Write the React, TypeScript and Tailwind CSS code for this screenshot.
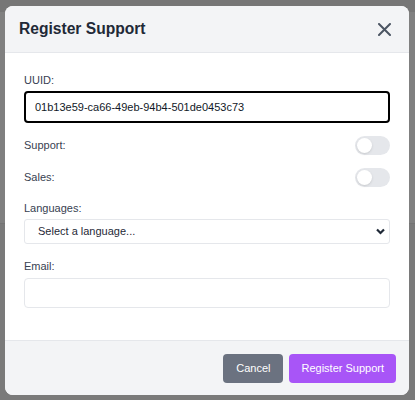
import React from "react";

// toggle switch, off state
function Toggle() {
  return (
    <span className="flex h-[19px] w-[35px] items-center rounded-full bg-[#e5e7eb] px-[2px]">
      <span className="h-[15px] w-[15px] rounded-full bg-white shadow-sm" />
    </span>
  );
}

export default function App() {
  return (
    <div className="relative h-[400px] w-full overflow-hidden bg-[#7a7a7a] font-['Liberation_Sans',Arial,sans-serif]">
      {/* page behind the overlay */}
      <div className="h-[12px] bg-[#767676]" />
      <div className="h-[212px] border-b border-[#747474] bg-[#808080]" />

      <div className="absolute left-[5px] top-[6px] flex w-[404px] flex-col overflow-hidden rounded-lg bg-white">
        <div className="flex h-[47px] items-center justify-between border-b border-[#e5e7eb] bg-[#f3f4f6] pl-[14px] pr-[18px]">
          <h2 className="text-[15.6px] font-bold text-[#1f2937]">Register Support</h2>
          <button className="text-[#4b5563]">
            <svg width="13" height="13" viewBox="0 0 13 13" fill="none" stroke="currentColor" strokeWidth="2" strokeLinecap="round">
              <path d="M1 1L12 12M12 1L1 12" />
            </svg>
          </button>
        </div>

        <div className="flex flex-col px-[19px] pb-[32px] pt-[19px] text-[11px] text-[#374151]">
          <label className="leading-[16px]">UUID:</label>
          <input
            readOnly
            value="01b13e59-ca66-49eb-94b4-501de0453c73"
            className="mt-[3px] h-[32px] rounded-[4px] border-2 border-black px-[9px] text-[11px] text-[#111827] outline-none"
          />

          <div className="mt-[13px] flex h-[19px] items-center justify-between">
            <span>Support:</span>
            <Toggle />
          </div>
          <div className="mt-[13px] flex h-[19px] items-center justify-between">
            <span>Sales:</span>
            <Toggle />
          </div>

          <label className="mt-[13px] leading-[16px]">Languages:</label>
          <div className="relative mt-[3px]">
            <select className="h-[25px] w-full appearance-none rounded-[3px] border border-[#e5e7eb] bg-white pl-[13px] text-[11px] text-[#1f2937] outline-none">
              <option>Select a language...</option>
            </select>
            <svg
              className="pointer-events-none absolute right-[5px] top-[9px] text-[#1f2937]"
              width="9"
              height="7"
              viewBox="0 0 9 7"
              fill="none"
              stroke="currentColor"
              strokeWidth="2.2"
            >
              <path d="M1 1.5L4.5 5L8 1.5" />
            </svg>
          </div>

          <label className="mt-[14px] leading-[16px]">Email:</label>
          <input className="mt-[4px] h-[30px] rounded-[4px] border border-[#e5e7eb] px-[9px] text-[11px] outline-none" />
        </div>

        <div className="flex h-[55px] items-start justify-end gap-[6px] border-t border-[#e5e7eb] bg-[#f3f4f6] pr-[13px] pt-[13px]">
          <button className="h-[29px] rounded-[4px] bg-[#6b7280] px-[13px] text-[11px] text-white">Cancel</button>
          <button className="h-[29px] rounded-[4px] bg-[#a855f7] px-[12px] text-[11px] text-white">Register Support</button>
        </div>
      </div>
    </div>
  );
}
